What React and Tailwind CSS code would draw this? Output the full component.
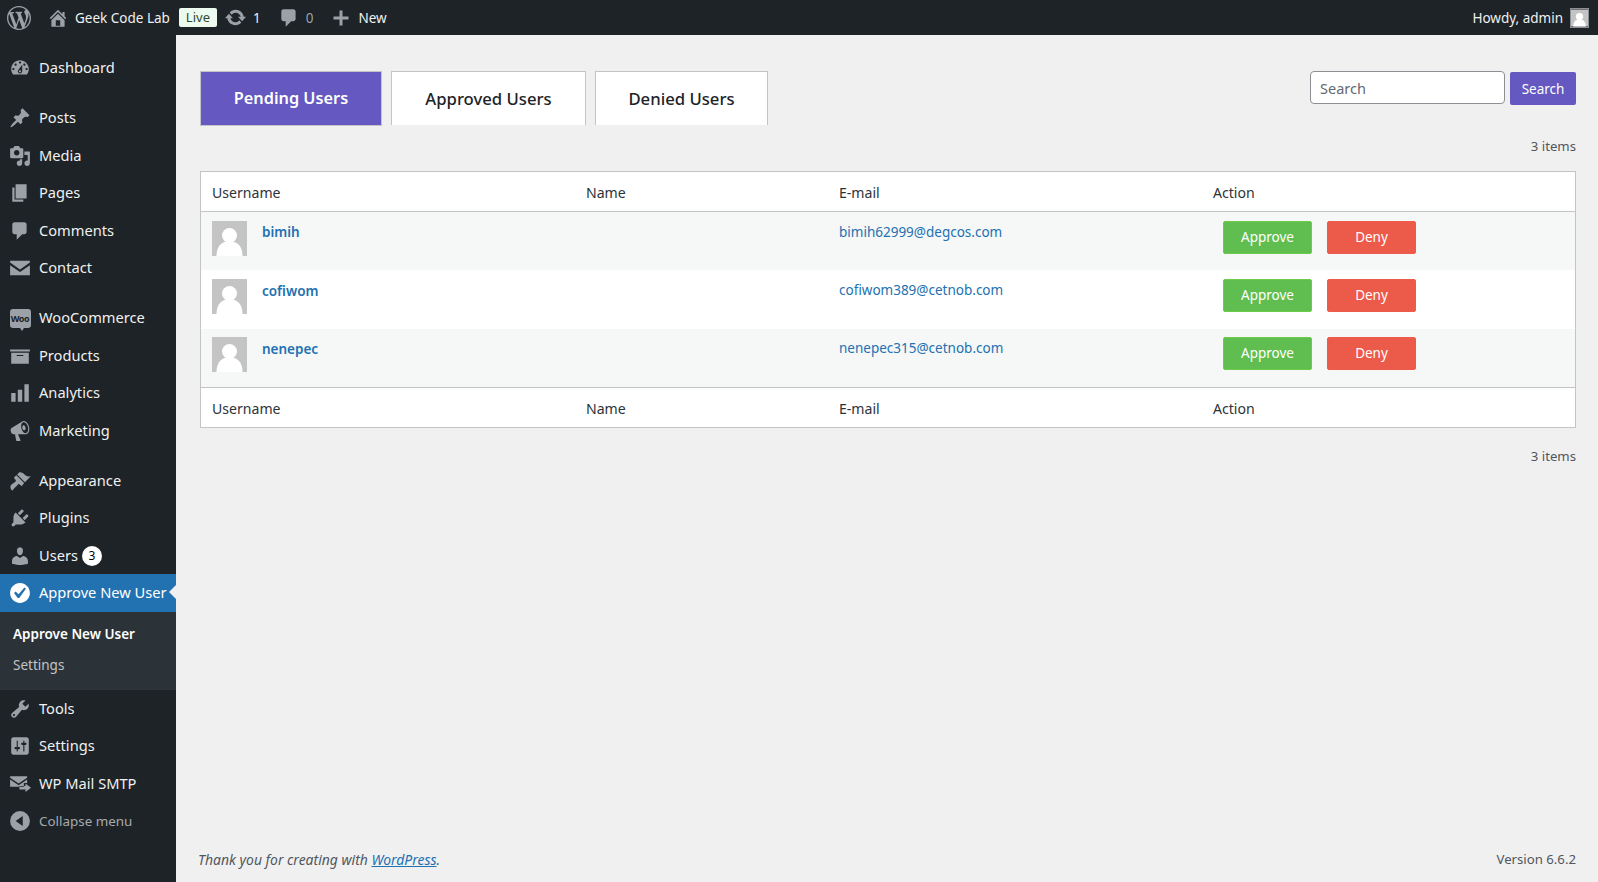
import React from 'react';

const FONT = 'font-["Noto_Sans",sans-serif]';

// Dashicons-style paths, all on a 20x20 box
const ICONS = {
    wp: 'M20 10c0-5.51-4.49-10-10-10C4.48 0 0 4.49 0 10c0 5.52 4.48 10 10 10 5.51 0 10-4.48 10-10zM7.78 15.37L4.37 6.22c.55-.02 1.17-.08 1.17-.08.5-.06.44-1.13-.06-1.11 0 0-1.45.11-2.37.11-.18 0-.37 0-.58-.01C4.12 2.69 6.87 1.11 10 1.11c2.33 0 4.45.87 6.05 2.34-.68-.11-1.65.39-1.65 1.58 0 .74.45 1.36.9 2.1.35.61.55 1.36.55 2.46 0 1.49-1.4 5-1.4 5l-3.03-8.37c.54-.02.82-.17.82-.17.5-.05.44-1.25-.06-1.22 0 0-1.44.12-2.38.12-.87 0-2.33-.12-2.33-.12-.5-.03-.56 1.2-.06 1.22l.92.08 1.26 3.41zM17.41 10c.24-.64.74-1.87.43-4.25.7 1.29 1.05 2.71 1.05 4.25 0 3.29-1.73 6.24-4.4 7.78.97-2.59 1.94-5.2 2.92-7.78zM6.1 18.09C3.12 16.65 1.11 13.53 1.11 10c0-1.3.23-2.48.72-3.59C3.25 10.3 4.67 14.2 6.1 18.09zm4.03-6.63l2.58 6.98c-.86.29-1.76.45-2.71.45-.79 0-1.57-.11-2.29-.33.81-2.38 1.62-4.74 2.42-7.1z',
    home: 'M16 8.5l1.53 1.53-1.06 1.06L10 4.62l-6.47 6.47-1.06-1.06L10 2.5l4 4v-2h2v4zm-6-2.46l6 5.99V18H4v-5.97zM12 17v-5H8v5h4z',
    update: 'M10.2 3.28c3.53 0 6.43 2.61 6.92 6h2.08l-3.5 4-3.5-4h2.32c-.45-1.97-2.21-3.45-4.32-3.45-1.45 0-2.73.71-3.54 1.78L4.95 5.66C6.23 4.2 8.11 3.28 10.2 3.28zm-.4 13.44c-3.52 0-6.43-2.61-6.92-6H.8l3.5-4c1.17 1.33 2.33 2.67 3.5 4H5.48c.45 1.97 2.21 3.45 4.32 3.45 1.45 0 2.73-.71 3.54-1.78l1.71 1.95c-1.28 1.46-3.15 2.38-5.25 2.38z',
    comment: 'M5 2h9c1.1 0 2 .9 2 2v7c0 1.1-.9 2-2 2h-2l-5 5v-5H5c-1.1 0-2-.9-2-2V4c0-1.1.9-2 2-2z',
    plus: 'M17.5 8.5v3H11.5v6h-3v-6H2.5v-3h6v-6h3v6z',
    dashboard: 'M3.76 16h12.48c1.1-1.37 1.76-3.11 1.76-5 0-4.42-3.58-8-8-8s-8 3.58-8 8c0 1.89.66 3.63 1.76 5zM10 4c.55 0 1 .45 1 1s-.45 1-1 1-1-.45-1-1 .45-1 1-1zM6 6c.55 0 1 .45 1 1s-.45 1-1 1-1-.45-1-1 .45-1 1-1zm8 0c.55 0 1 .45 1 1s-.45 1-1 1-1-.45-1-1 .45-1 1-1zm-5.37 5.55L12 7v6c0 1.1-.9 2-2 2s-2-.9-2-2c0-.57.24-1.08.63-1.45zM4 10c.55 0 1 .45 1 1s-.45 1-1 1-1-.45-1-1 .45-1 1-1zm12 0c.55 0 1 .45 1 1s-.45 1-1 1-1-.45-1-1 .45-1 1-1zm-5 3c0-.55-.45-1-1-1s-1 .45-1 1 .45 1 1 1 1-.45 1-1z',
    posts: 'M10.44 3.02l1.82-1.82 6.36 6.35-1.83 1.82c-1.05-.68-2.48-.57-3.41.36l-.75.75c-.92.93-1.04 2.35-.35 3.41l-1.83 1.82-2.41-2.41-2.8 2.79c-.42.42-3.38 2.71-3.8 2.29s1.86-3.39 2.28-3.81l2.79-2.79L4.1 9.36l1.83-1.82c1.05.69 2.48.57 3.4-.36l.75-.75c.93-.92 1.05-2.35.36-3.41z',
    media: 'M13 11V4c0-.55-.45-1-1-1h-1.67L9 1H5L3.67 3H2c-.55 0-1 .45-1 1v7c0 .55.45 1 1 1h10c.55 0 1-.45 1-1zM7 4.5c1.38 0 2.5 1.12 2.5 2.5S8.38 9.5 7 9.5 4.5 8.38 4.5 7 5.62 4.5 7 4.5zM14 6h5v10.5c0 1.38-1.12 2.5-2.5 2.5S14 17.88 14 16.5s1.12-2.5 2.5-2.5c.17 0 .34.02.5.05V9h-3V6zm-4 8.05V13h2v3.5c0 1.38-1.12 2.5-2.5 2.5S7 17.88 7 16.5 8.12 14 9.5 14c.17 0 .34.02.5.05z',
    pages: 'M6 15V2h10v13H6zm-1 1h8v2H3V5h2v11z',
    email: 'M1 3.5h18v1.6l-9 6.2-9-6.2zM1 7.4l9 6.2 9-6.2v9.1H1z',
    products: 'M19 4v2H1V4h18zM2 7h16v10H2V7zm11 3V9H7v1h6z',
    analytics: 'M18 18V2h-4v16h4zm-6 0V7H8v11h4zm-6 0v-8H2v8h4z',
    marketing: 'M18.15 5.94c.46 1.62.38 3.22-.02 4.48-.42 1.28-1.26 2.18-2.3 2.48-.16.06-.26.06-.4.06-.06.02-.12.02-.18.02-.06.02-.14.02-.22.02h-6.8l2.22 5.5c.02.14-.06.26-.14.34-.08.1-.24.16-.34.16H6.95c-.1 0-.26-.06-.34-.16-.08-.08-.16-.2-.14-.34l-1-5.5H4.25l-.02-.02c-.5.06-1.08-.18-1.54-.62s-.88-1.08-1.06-1.88c-.24-.8-.2-1.56-.02-2.2.18-.62.58-1.08 1.06-1.3l.02-.02 9-5.4c.1-.06.18-.1.24-.16.06-.04.14-.08.24-.12.16-.08.28-.12.5-.18 1.04-.3 2.24.1 3.22.98s1.84 2.24 2.26 3.86zm-2.58 5.98h-.02c.4-.1.74-.34 1.04-.7.58-.7.86-1.76.86-3.04-.02-.64-.1-1.3-.28-1.98-.34-1.36-1.02-2.5-1.78-3.24s-1.68-1.1-2.46-.88c-.82.22-1.4.96-1.7 2-.32 1.04-.28 2.36.06 3.72.38 1.36 1 2.5 1.8 3.24.78.74 1.62 1.1 2.48.88zm-2.54-7.08c.22-.04.42-.02.62.04.38.16.76.48 1.02 1s.42 1.2.42 1.78c0 .3-.04.56-.12.8-.18.48-.44.84-.86.94-.34.1-.8-.06-1.14-.4-.36-.34-.64-.84-.82-1.44-.28-1.14 0-2.38.88-2.72z',
    appearance: 'M14.48 11.06L7.41 3.99l1.5-1.5c.5-.56 2.3-.47 3.51.32 1.21.8 1.43 1.28 2.91 2.1 1.18.64 2.45 1.26 4.45.85zm-.71.71L6.7 4.7 4.93 6.47c-.39.39-.39 1.02 0 1.41l1.06 1.06c.39.39.39 1.03 0 1.42-.6.6-1.43 1.11-2.21 1.69-.35.26-.7.53-1.01.84C1.43 13.23.99 15.1 1.48 16.5c.28.8 1.2 2.3 1.6 2.1.8-.4 1.2-1.5 2.1-2.4 1-1 2.1-2.2 3-3.1.39-.39 1.03-.39 1.42 0l1.06 1.06c.39.39 1.02.39 1.41 0z',
    plugins: 'M13.11 4.36L9.87 7.6 8 5.73l3.24-3.24c.35-.34 1.05-.2 1.56.32.52.51.66 1.21.31 1.55zm-8 1.77l.91-1.12 9.01 9.01-1.19.84c-.71.71-2.63 1.16-3.82 1.16H6.14L4.9 17.26c-.59.59-1.54.59-2.12 0-.59-.58-.59-1.53 0-2.12l1.24-1.24v-3.88c0-1.13.4-3.19 1.09-3.89zm7.26 3.97l3.24-3.24c.34-.35 1.04-.21 1.55.31.52.51.66 1.21.31 1.55l-3.24 3.25z',
    users: 'M10 9.25c-2.27 0-2.73-3.44-2.73-3.44C7 4.02 7.82 2 9.97 2c2.16 0 2.98 2.02 2.71 3.81 0 0-.41 3.44-2.68 3.44zm0 2.57L12.72 10c2.39 0 4.52 2.33 4.52 4.53v2.49s-3.65 1.13-7.24 1.13c-3.65 0-7.24-1.13-7.24-1.13v-2.49c0-2.25 1.94-4.48 4.47-4.48z',
    check: 'M10 1c-4.97 0-9 4.03-9 9s4.03 9 9 9 9-4.03 9-9-4.03-9-9-9zm-.7 13.6H7.9L4.6 10l1.4-1.3 2.7 2.5 5.3-6.1 1.4 1z',
    tools: 'M16.68 9.77c-1.34 1.34-3.3 1.67-4.95.99l-5.41 6.52c-.99.99-2.59.99-3.58 0s-.99-2.59 0-3.57l6.52-5.42c-.68-1.65-.35-3.61.99-4.95 1.28-1.28 3.12-1.62 4.72-1.06l-2.89 2.89 2.82 2.82 2.86-2.87c.53 1.58.18 3.39-1.08 4.65zM3.81 16.21c.4.39 1.04.39 1.43 0 .4-.4.4-1.04 0-1.43-.39-.4-1.03-.4-1.43 0-.39.39-.39 1.03 0 1.43z',
    settings: 'M18 16V4c0-1.1-.9-2-2-2H4c-1.1 0-2 .9-2 2v12c0 1.1.9 2 2 2h12c1.1 0 2-.9 2-2zM8 11h1c.55 0 1 .45 1 1s-.45 1-1 1H8v1.5c0 .28-.22.5-.5.5s-.5-.22-.5-.5V13H6c-.55 0-1-.45-1-1s.45-1 1-1h1V5.5c0-.28.22-.5.5-.5s.5.22.5.5V11zm5-2h-1c-.55 0-1-.45-1-1s.45-1 1-1h1V5.5c0-.28.22-.5.5-.5s.5.22.5.5V7h1c.55 0 1 .45 1 1s-.45 1-1 1h-1v5.5c0 .28-.22.5-.5.5s-.5-.22-.5-.5V9z',
    smtp: 'M1 3h15.5v1.3L8.75 9.6 1 4.3zM1 5.9l7.75 5.3 7.75-5.3V9h-3v3.5H1zM15 9.5l5 3.9-5 3.9V15h-5.5v-3.2H15z',
    collapse: 'M10 1a9 9 0 1 0 0 18 9 9 0 0 0 0-18zM12.5 5.5v9L6 10z',
};

const Icon = ({ name, className }) => (
    <svg viewBox="0 0 20 20" className={className} fill="currentColor" fillRule="evenodd">
        <path d={ICONS[name]} />
    </svg>
);

const Avatar = ({ className }) => (
    <svg viewBox="0 0 35 35" className={className}>
        <rect width="35" height="35" fill="#c4c4c4" />
        <circle cx="17.5" cy="14.5" r="7.5" fill="#fff" />
        <path d="M4.5 35c0-8 3.5-12.5 8-14h10c4.5 1.5 8 6 8 14z" fill="#fff" />
    </svg>
);

const WooIcon = () => (
    <div className="relative flex h-[19px] w-[21px] items-center justify-center rounded-[3px] bg-[#9ca1a7]">
        <span className="text-[9px] leading-none font-bold tracking-tighter text-[#1d2327]">Woo</span>
        <span className="absolute -bottom-[3px] left-[10px] h-0 w-0 border-x-[2px] border-t-[3px] border-x-transparent border-t-[#9ca1a7]" />
    </div>
);

const MenuItem = ({ icon, label, children }) => (
    <div className="flex h-[37.4px] items-center text-[14.65px] text-[#f0f0f1]">
        <div className="flex w-[39px] justify-center pl-[1px] text-[#9ca1a7]">
            {icon === 'woo' ? <WooIcon /> : <Icon name={icon} className="h-[22px] w-[22px]" />}
        </div>
        <span>{label}</span>
        {children}
    </div>
);

const Sidebar = () => (
    <aside className="flex w-[176px] shrink-0 flex-col bg-[#1d2327] pt-[14.3px]">
        <MenuItem icon="dashboard" label="Dashboard" />
        <div className="h-[13px]" />
        <MenuItem icon="posts" label="Posts" />
        <MenuItem icon="media" label="Media" />
        <MenuItem icon="pages" label="Pages" />
        <MenuItem icon="comment" label="Comments" />
        <MenuItem icon="email" label="Contact" />
        <div className="h-[13px]" />
        <MenuItem icon="woo" label="WooCommerce" />
        <MenuItem icon="products" label="Products" />
        <MenuItem icon="analytics" label="Analytics" />
        <MenuItem icon="marketing" label="Marketing" />
        <div className="h-[13px]" />
        <MenuItem icon="appearance" label="Appearance" />
        <MenuItem icon="plugins" label="Plugins" />
        <MenuItem icon="users" label="Users">
            <span className="ml-[4px] flex h-[20px] w-[20px] items-center justify-center rounded-full bg-white text-[12px] text-black">3</span>
        </MenuItem>
        <div className="relative flex h-[37.4px] items-center bg-[#2271b1] text-[14.65px] text-white">
            <div className="flex w-[39px] justify-center pl-[1px] text-white">
                <Icon name="check" className="h-[22px] w-[22px]" />
            </div>
            <span className="whitespace-nowrap">Approve New User</span>
            <span className="absolute top-[11px] right-0 h-0 w-0 border-y-[7px] border-r-[7px] border-y-transparent border-r-[#f0f0f1]" />
        </div>
        <div className="flex h-[78.6px] flex-col bg-[#2c3338] pt-[7px] text-[13.5px]">
            <div className="flex h-[31px] items-center pl-[13px] font-semibold text-white">Approve New User</div>
            <div className="flex h-[31px] items-center pl-[13px] text-[#c3c4c7]">Settings</div>
        </div>
        <MenuItem icon="tools" label="Tools" />
        <MenuItem icon="settings" label="Settings" />
        <MenuItem icon="smtp" label="WP Mail SMTP" />
        <div className="flex h-[37.4px] items-center text-[13.4px] text-[#a7aaad]">
            <div className="flex w-[39px] justify-center pl-[1px] text-[#9ca1a7]">
                <Icon name="collapse" className="h-[22px] w-[22px]" />
            </div>
            <span>Collapse menu</span>
        </div>
    </aside>
);

const AdminBar = () => (
    <header className="flex h-[35px] shrink-0 items-center justify-between bg-[#1d2327] text-[13.5px] text-[#f0f0f1]">
        <div className="flex items-center">
            <Icon name="wp" className="ml-[7px] h-[24px] w-[24px] text-[#9ca1a7]" />
            <Icon name="home" className="ml-[16px] h-[22px] w-[22px] text-[#9ca1a7]" />
            <span className="ml-[6px] pt-[2px]">Geek Code Lab</span>
            <span className="ml-[9px] flex h-[19px] items-center rounded-[2px] bg-[#edfaef] px-[7px] pt-[1px] text-[13px] text-[#2e4a36]">Live</span>
            <Icon name="update" className="ml-[7px] h-[23px] w-[23px] text-[#9ca1a7]" />
            <span className="ml-[6px] pt-[2px]">1</span>
            <Icon name="comment" className="ml-[17px] h-[22px] w-[22px] text-[#9ca1a7]" />
            <span className="ml-[6px] pt-[2px] text-[#9ca1a7]">0</span>
            <Icon name="plus" className="ml-[18px] h-[20px] w-[20px] text-[#9ca1a7]" />
            <span className="ml-[7px] pt-[2px]">New</span>
        </div>
        <div className="flex items-center">
            <span className="pt-[2px]">Howdy, admin</span>
            <Avatar className="mr-[9px] ml-[7px] h-[20px] w-[19px] border border-[#8c8f94]" />
        </div>
    </header>
);

const USERS = [
    { name: 'bimih', email: 'bimih62999@degcos.com', bg: 'bg-[#f6f7f7]', box: 'h-[58px] pt-[9px]', nudge: '' },
    { name: 'cofiwom', email: 'cofiwom389@cetnob.com', bg: 'bg-white', box: 'h-[59px] pt-[9px]', nudge: 'pt-[1px]' },
    { name: 'nenepec', email: 'nenepec315@cetnob.com', bg: 'bg-[#f6f7f7]', box: 'h-[58px] pt-[8px]', nudge: 'pt-[1px]' },
];

const COLS = 'grid grid-cols-[374px_253px_374px_1fr]';

const HeadRow = ({ className }) => (
    <div className={`${COLS} h-[40px] items-center bg-white pt-[2px] text-[14.1px] text-[#2c3338] ${className}`}>
        <div className="pl-[11px]">Username</div>
        <div className="pl-[11px]">Name</div>
        <div className="pl-[11px]">E-mail</div>
        <div className="pl-[11px]">Action</div>
    </div>
);

const UserRow = ({ user }) => (
    <div className={`${COLS} ${user.bg} ${user.box}`}>
        <div className="flex pl-[11px]">
            <Avatar className="h-[35px] w-[35px]" />
            <a className={`ml-[15px] text-[13.5px] leading-[22px] font-semibold text-[#2271b1] ${user.nudge}`}>{user.name}</a>
        </div>
        <div />
        <a className="pl-[11px] text-[13.5px] leading-[22px] text-[#2271b1]">{user.email}</a>
        <div className="flex gap-[15px] pl-[21px]">
            <button className="h-[33px] w-[89px] rounded-[2px] border border-[#6ecb49] bg-[#5fbe4f] text-[13.5px] text-white">Approve</button>
            <button className="h-[33px] w-[89px] rounded-[2px] border border-[#ef5b4b] bg-[#ec5a49] text-[13.5px] text-white">Deny</button>
        </div>
    </div>
);

const Tab = ({ label, active, width }) => (
    <div
        className={`flex items-center justify-center border border-[#c3c4c7] ${width} ${
            active
                ? 'h-[55px] bg-[#6558c0] text-[16.3px] font-semibold text-white'
                : 'h-[54px] border-b-0 bg-white text-[16.7px] font-medium text-[#1d2327]'
        }`}
    >
        {label}
    </div>
);

const Main = () => (
    <main className="flex min-w-0 flex-1 flex-col bg-[#f0f0f1] pt-[36px] pr-[22px] pb-[11px] pl-[24px]">
        <div className="flex h-[55px] items-start justify-between">
            <div className="flex gap-[9px]">
                <Tab label="Pending Users" width="w-[182px]" active />
                <Tab label="Approved Users" width="w-[195px]" />
                <Tab label="Denied Users" width="w-[173px]" />
            </div>
            <div className="flex gap-[5px]">
                <div className="flex h-[33px] w-[195px] items-center rounded-[4px] border border-[#8c8f94] bg-white pt-[2px] pl-[9px] text-[14.5px] text-[#646970]">Search</div>
                <button className="mt-[1px] h-[33px] w-[66px] rounded-[2px] bg-[#6558c0] pt-[1px] text-[13.5px] text-white">Search</button>
            </div>
        </div>
        <div className="mt-[11px] text-right text-[13.2px] text-[#50575e]">3 items</div>
        <div className="mt-[14px] border border-[#c3c4c7]">
            <HeadRow className="border-b border-[#c3c4c7]" />
            {USERS.map((u) => (
                <UserRow key={u.name} user={u} />
            ))}
            <HeadRow className="border-t border-[#c3c4c7]" />
        </div>
        <div className="mt-[19px] text-right text-[13.2px] text-[#50575e]">3 items</div>
        <div className="mt-auto flex justify-between">
            <span className="-ml-[2px] text-[13.95px] text-[#50575e] italic">
                Thank you for creating with <a className="text-[#2271b1] underline">WordPress</a>.
            </span>
            <span className="text-[13.2px] text-[#50575e]">Version 6.6.2</span>
        </div>
    </main>
);

export default function App() {
    return (
        <div className={`flex h-[882px] w-full flex-col overflow-hidden ${FONT}`}>
            <AdminBar />
            <div className="flex min-h-0 flex-1">
                <Sidebar />
                <Main />
            </div>
        </div>
    );
}
